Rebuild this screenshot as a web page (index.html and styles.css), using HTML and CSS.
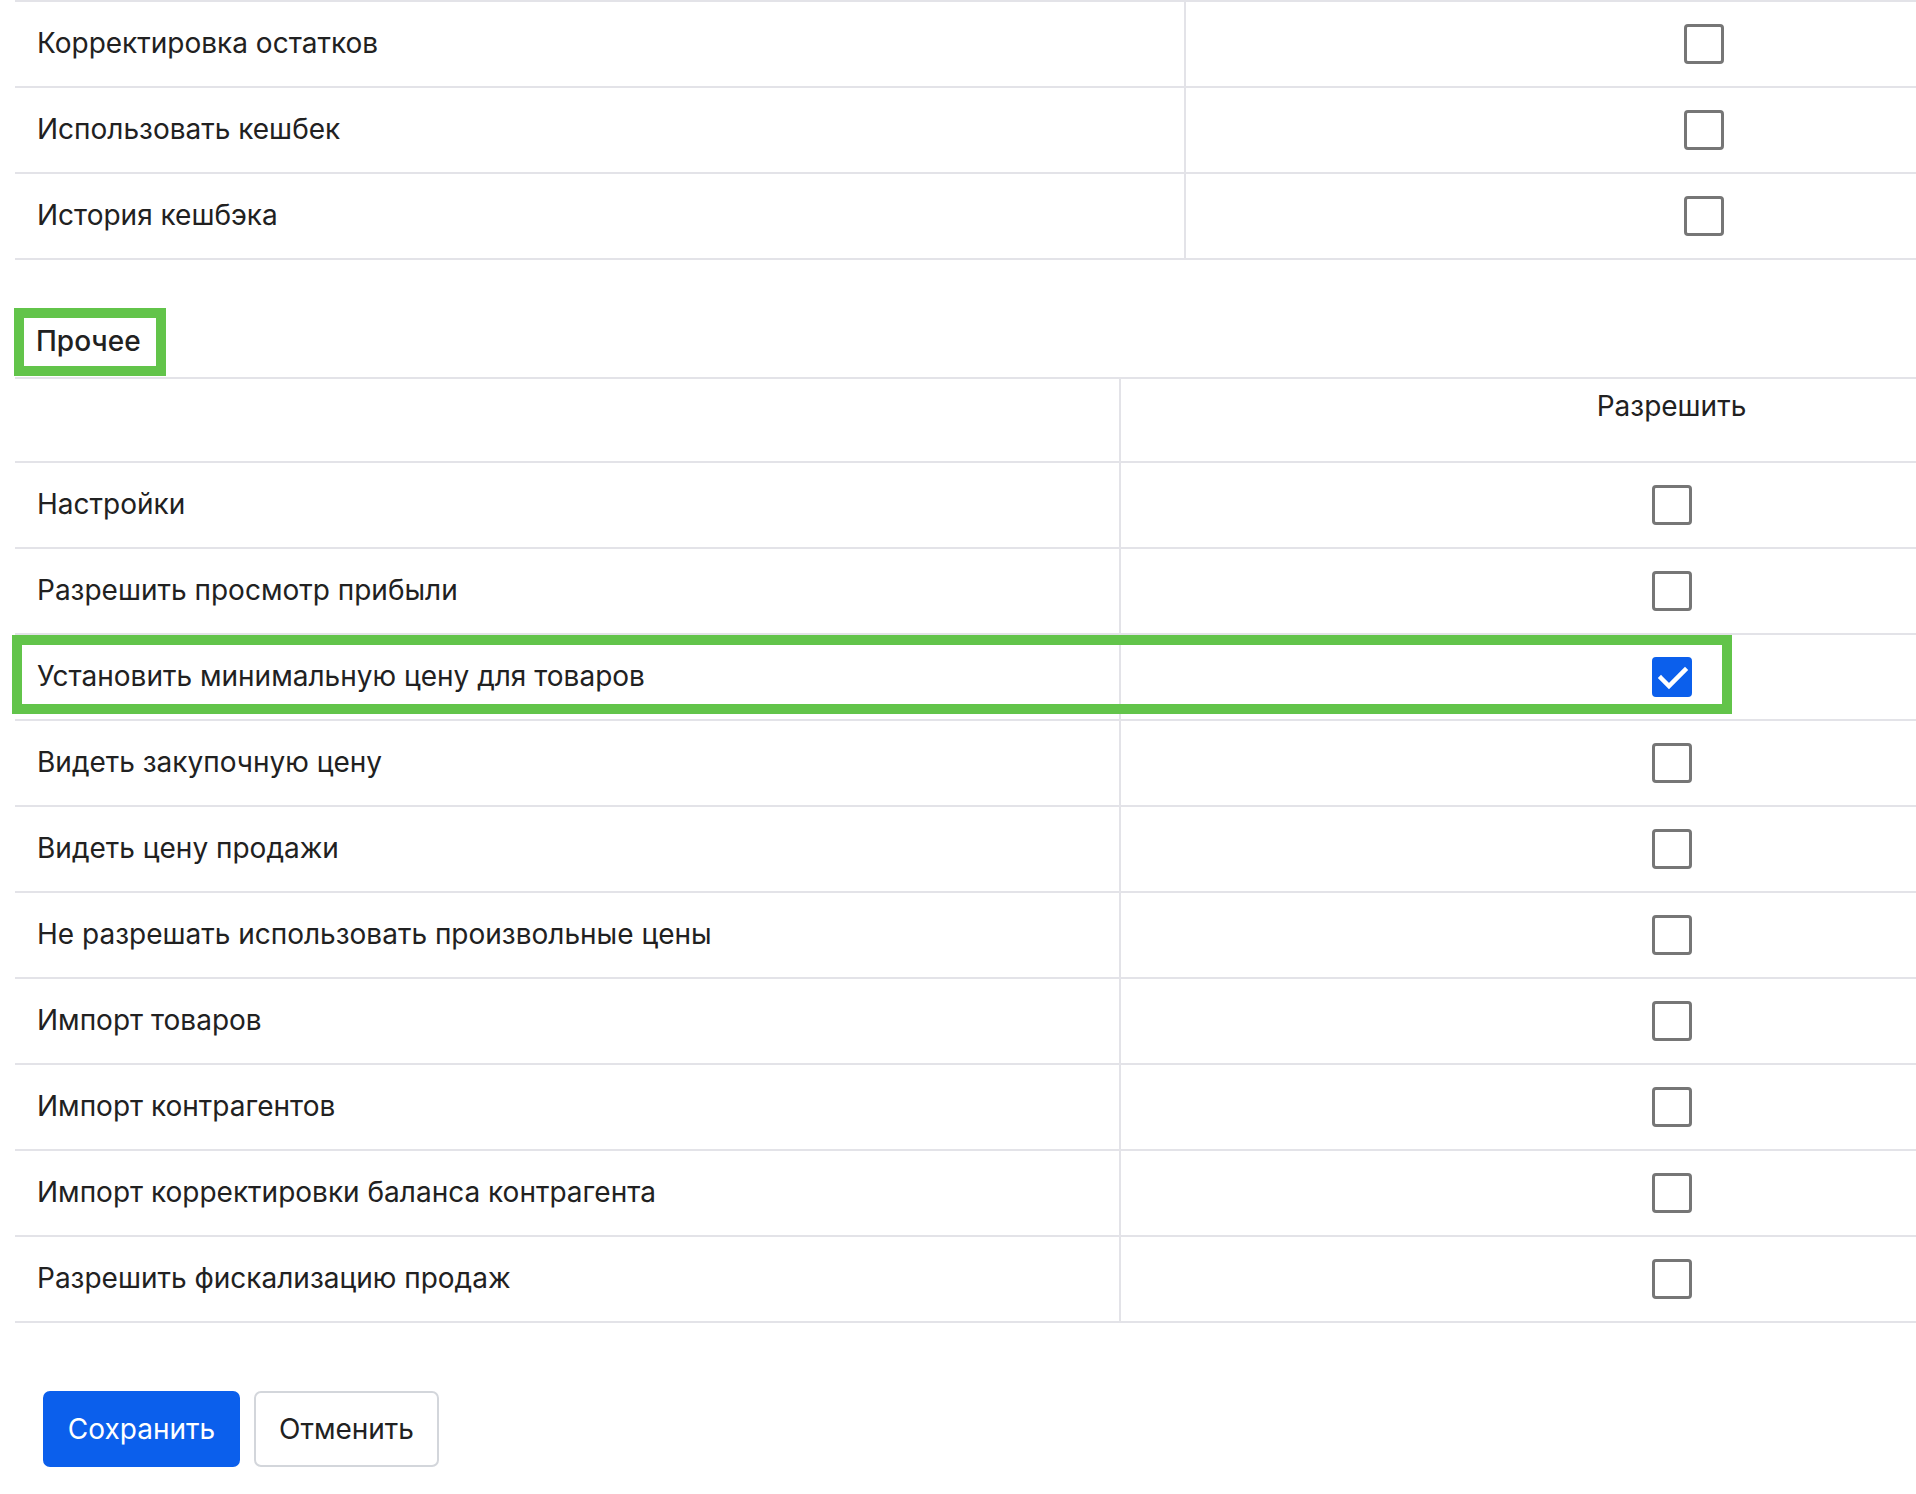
FILE: index.html
```html
<!DOCTYPE html>
<html lang="ru">
<head>
<meta charset="utf-8">
<title>Права</title>
<link rel="stylesheet" href="styles.css">
</head>
<body>
<div class="page">
  <table class="perm perm-top">
    <colgroup><col class="c1-top"><col></colgroup>
    <tbody>
      <tr><td class="name">Корректировка остатков</td><td class="chk"><span class="box"></span></td></tr>
      <tr><td class="name">Использовать кешбек</td><td class="chk"><span class="box"></span></td></tr>
      <tr><td class="name">История кешбэка</td><td class="chk"><span class="box"></span></td></tr>
    </tbody>
  </table>

  <div class="section-title"><span class="title-box">Прочее</span></div>

  <table class="perm perm-other">
    <colgroup><col class="c1-other"><col></colgroup>
    <thead>
      <tr><th></th><th class="head">Разрешить</th></tr>
    </thead>
    <tbody>
      <tr><td class="name">Настройки</td><td class="chk"><span class="box"></span></td></tr>
      <tr><td class="name">Разрешить просмотр прибыли</td><td class="chk"><span class="box"></span></td></tr>
      <tr><td class="name marked"><span class="highlight"></span>Установить минимальную цену для товаров</td><td class="chk"><span class="box checked"><svg viewBox="0 0 40 40" width="40" height="40"><path d="M9 21 L17 29 L33 13" fill="none" stroke="#fff" stroke-width="4.5" stroke-linecap="square"/></svg></span></td></tr>
      <tr><td class="name">Видеть закупочную цену</td><td class="chk"><span class="box"></span></td></tr>
      <tr><td class="name">Видеть цену продажи</td><td class="chk"><span class="box"></span></td></tr>
      <tr><td class="name">Не разрешать использовать произвольные цены</td><td class="chk"><span class="box"></span></td></tr>
      <tr><td class="name">Импорт товаров</td><td class="chk"><span class="box"></span></td></tr>
      <tr><td class="name">Импорт контрагентов</td><td class="chk"><span class="box"></span></td></tr>
      <tr><td class="name">Импорт корректировки баланса контрагента</td><td class="chk"><span class="box"></span></td></tr>
      <tr><td class="name">Разрешить фискализацию продаж</td><td class="chk"><span class="box"></span></td></tr>
    </tbody>
  </table>

  <div class="actions">
    <button class="btn btn-primary">Сохранить</button>
    <button class="btn btn-light">Отменить</button>
  </div>
</div>
</body>
</html>
```

FILE: styles.css
```css
html, body {
  margin: 0;
  padding: 0;
  background: #ffffff;
  overflow: hidden;
}

body {
  font-family: Inter, "Noto Sans", "Liberation Sans", sans-serif;
  font-size: 28px;
  color: #212121;
}

.page {
  width: 1916px;
  overflow: hidden;
}

.perm {
  border-collapse: collapse;
  width: 2207px;
  margin-left: 15px;
  table-layout: fixed;
}

.c1-top { width: 1170px; }
.c1-other { width: 1105px; }

.perm td, .perm th {
  border-top: 2px solid #e3e3e8;
  border-bottom: 2px solid #e3e3e8;
  padding: 0;
}

.perm td + td, .perm th + th {
  border-left: 2px solid #e3e3e8;
}

.perm tbody tr {
  height: 86px;
}

.perm thead tr {
  height: 84px;
}

.name {
  padding-left: 22px !important;
  padding-bottom: 2px !important;
  vertical-align: middle;
  white-space: nowrap;
}

.chk {
  text-align: center;
  vertical-align: middle;
}

.head {
  font-weight: 400;
  vertical-align: top;
  padding-top: 10px !important;
  text-align: center;
}

.box {
  display: inline-block;
  width: 40px;
  height: 40px;
  box-sizing: border-box;
  border: 3px solid #767676;
  border-radius: 4px;
  vertical-align: middle;
  position: relative;
}

.box.checked {
  background: #0b5fec;
  border-color: #0b5fec;
}

.box.checked svg {
  position: absolute;
  left: -3px;
  top: -3px;
}

.section-title {
  margin-top: 48px;
  margin-left: 14px;
  height: 68px;
  margin-bottom: 1px;
}

.title-box {
  display: inline-block;
  box-sizing: border-box;
  height: 68px;
  width: 152px;
  border: 10px solid #62c44a;
  padding-left: 12px;
  line-height: 46px;
  font-weight: 500;
}

.marked {
  position: relative;
}

.highlight {
  position: absolute;
  left: -3px;
  top: 0px;
  width: 1720px;
  height: 79px;
  box-sizing: border-box;
  border: 10px solid #62c44a;
  pointer-events: none;
}

.actions {
  display: flex;
  gap: 14px;
  margin-top: 68px;
  margin-left: 43px;
}

.btn {
  font-family: inherit;
  font-size: 28px;
  height: 76px;
  box-sizing: border-box;
  border-radius: 7px;
  cursor: pointer;
}

.btn-primary {
  width: 197px;
  background: #0b5fec;
  border: 2px solid #0b5fec;
  color: #ffffff;
}

.btn-light {
  width: 185px;
  background: #ffffff;
  border: 2px solid #d3d6db;
  color: #212121;
}
```
